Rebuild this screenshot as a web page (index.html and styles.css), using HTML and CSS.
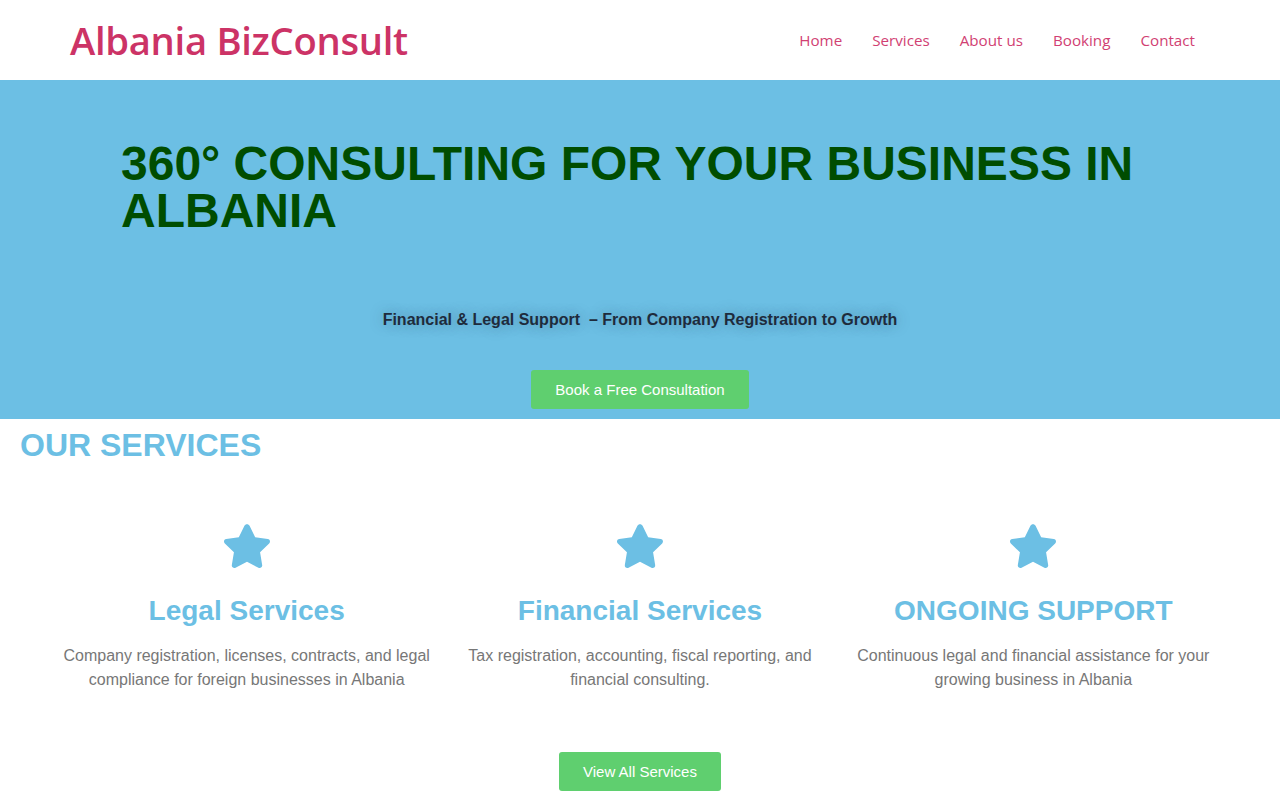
FILE: index.html
```html
<!DOCTYPE html>
<html lang="en">
<head>
<meta charset="utf-8">
<title>Albania BizConsult</title>
<link rel="stylesheet" href="styles.css">
</head>
<body>
<header class="site-header">
  <div class="logo">Albania BizConsult</div>
  <nav class="nav">
    <a href="#">Home</a>
    <a href="#">Services</a>
    <a href="#">About us</a>
    <a href="#">Booking</a>
    <a href="#">Contact</a>
  </nav>
</header>
<section class="hero">
  <h1 class="hero-title">360° CONSULTING FOR YOUR BUSINESS IN ALBANIA</h1>
  <p class="hero-sub">Financial &amp; Legal Support&nbsp; – From Company Registration to Growth</p>
  <a class="btn" href="#">Book a Free Consultation</a>
</section>
<section class="services">
  <h2 class="services-title">OUR SERVICES</h2>
  <div class="cards">
    <div class="card">
      <svg class="star" viewBox="0 0 24 24"><path d="M12 2.2c.5 0 .9.3 1.1.7l2.4 4.9 5.4.8c.9.1 1.3 1.2.6 1.9l-3.9 3.8.9 5.4c.2.9-.8 1.6-1.6 1.2L12 18.3l-4.9 2.6c-.8.4-1.8-.3-1.6-1.2l.9-5.4-3.9-3.8c-.7-.7-.3-1.8.6-1.9l5.4-.8 2.4-4.9c.2-.4.6-.7 1.1-.7z"/></svg>
      <h3 class="card-title">Legal Services</h3>
      <p class="card-text">Company registration, licenses, contracts, and legal compliance for foreign businesses in Albania</p>
    </div>
    <div class="card">
      <svg class="star" viewBox="0 0 24 24"><path d="M12 2.2c.5 0 .9.3 1.1.7l2.4 4.9 5.4.8c.9.1 1.3 1.2.6 1.9l-3.9 3.8.9 5.4c.2.9-.8 1.6-1.6 1.2L12 18.3l-4.9 2.6c-.8.4-1.8-.3-1.6-1.2l.9-5.4-3.9-3.8c-.7-.7-.3-1.8.6-1.9l5.4-.8 2.4-4.9c.2-.4.6-.7 1.1-.7z"/></svg>
      <h3 class="card-title">Financial Services</h3>
      <p class="card-text">Tax registration, accounting, fiscal reporting, and financial consulting.</p>
    </div>
    <div class="card">
      <svg class="star" viewBox="0 0 24 24"><path d="M12 2.2c.5 0 .9.3 1.1.7l2.4 4.9 5.4.8c.9.1 1.3 1.2.6 1.9l-3.9 3.8.9 5.4c.2.9-.8 1.6-1.6 1.2L12 18.3l-4.9 2.6c-.8.4-1.8-.3-1.6-1.2l.9-5.4-3.9-3.8c-.7-.7-.3-1.8.6-1.9l5.4-.8 2.4-4.9c.2-.4.6-.7 1.1-.7z"/></svg>
      <h3 class="card-title">ONGOING SUPPORT</h3>
      <p class="card-text">Continuous legal and financial assistance for your growing business in Albania</p>
    </div>
  </div>
  <div class="more">
    <a class="btn" href="#">View All Services</a>
  </div>
</section>
</body>
</html>
```
FILE: styles.css
```css
* { box-sizing: border-box; }
html, body { margin: 0; padding: 0; }
body {
  font-family: "Liberation Sans", Arial, sans-serif;
  background: #ffffff;
  overflow: hidden;
}
.site-header {
  height: 80px;
  display: flex;
  align-items: center;
  justify-content: space-between;
  padding: 0 85px 0 70px;
}
.logo {
  font-family: "Open Sans", "Noto Sans", sans-serif;
  font-size: 38.2px;
  font-weight: 600;
  color: #cc3366;
  letter-spacing: -0.3px;
}
.nav {
  display: flex;
  gap: 30px;
}
.nav a {
  font-family: "Open Sans", "Noto Sans", sans-serif;
  font-size: 15.2px;
  color: #d13f73;
  text-decoration: none;
}
.hero {
  background: #6cbfe4;
  height: 339px;
  display: flex;
  flex-direction: column;
  align-items: center;
  padding: 0;
}
.hero-title {
  align-self: stretch;
  margin: 0;
  padding: 60px 121px 0 121px;
  font-size: 48px;
  line-height: 47px;
  font-weight: 700;
  color: #004d00;
}
.hero-sub {
  margin: 77px 0 0 0;
  font-size: 16px;
  font-weight: 700;
  color: #1e2b3c;
  text-shadow: 0 0 14px rgba(40, 60, 80, 0.4);
}
.btn {
  display: inline-block;
  background: #5fcf6f;
  color: #ffffff;
  text-decoration: none;
  font-size: 15px;
  line-height: 39px;
  height: 39px;
  padding: 0 24px;
  border-radius: 3px;
}
.hero .btn {
  margin-top: 41px;
}
.services-title {
  margin: 0;
  padding: 8px 20px 0 20px;
  font-size: 32px;
  line-height: 36px;
  font-weight: 700;
  color: #6cbfe4;
}
.cards {
  display: grid;
  grid-template-columns: repeat(3, 1fr);
  padding: 0 50px;
  margin-top: 56px;
}
.card {
  display: flex;
  flex-direction: column;
  align-items: center;
  text-align: center;
  padding: 0 12px;
}
.star {
  width: 56px;
  height: 56px;
  fill: #6cbfe4;
  display: block;
}
.card-title {
  margin: 18px 0 0 0;
  font-size: 28px;
  line-height: 36px;
  font-weight: 700;
  color: #6cbfe4;
}
.card-text {
  margin: 15px 0 0 0;
  font-size: 16px;
  line-height: 24px;
  color: #777777;
}
.more {
  display: flex;
  justify-content: center;
  margin-top: 60px;
}
```
